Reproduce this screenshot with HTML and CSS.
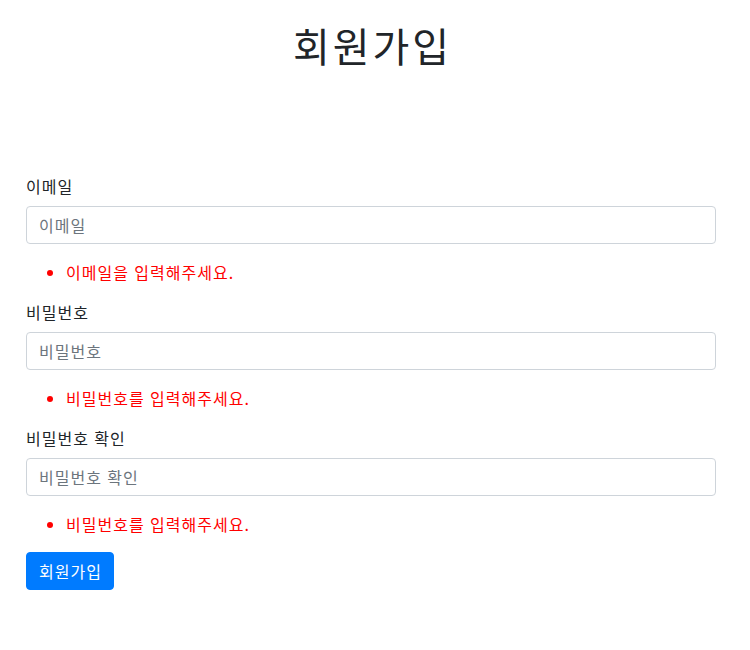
FILE: index.html
```html
<!DOCTYPE html>
<html lang="ko">
<head>
<meta charset="utf-8">
<title>회원가입</title>
<link rel="stylesheet" href="styles.css">
</head>
<body>
<div class="container">
  <h1 class="title">회원가입</h1>
  <form class="form">
    <label class="label" for="email">이메일</label>
    <input class="input" id="email" type="text" placeholder="이메일">
    <ul class="errors"><li>이메일을 입력해주세요.</li></ul>
    <label class="label" for="pw">비밀번호</label>
    <input class="input" id="pw" type="password" placeholder="비밀번호">
    <ul class="errors"><li>비밀번호를 입력해주세요.</li></ul>
    <label class="label" for="pw2">비밀번호 확인</label>
    <input class="input" id="pw2" type="password" placeholder="비밀번호 확인">
    <ul class="errors"><li>비밀번호를 입력해주세요.</li></ul>
    <button class="btn" type="button">회원가입</button>
  </form>
</div>
</body>
</html>
```
FILE: styles.css
```css
* { box-sizing: border-box; }
body {
  margin: 0;
  font-family: "Noto Sans CJK KR", "Noto Sans", sans-serif;
  font-size: 16px;
  line-height: 1.5;
  letter-spacing: 1px;
  color: #212529;
  background: #fff;
}
.container {
  padding: 21px 34px 0 26px;
}
.title {
  margin: 0;
  text-align: center;
  font-size: 40px;
  font-weight: 400;
  line-height: 48px;
  letter-spacing: 3px;
  text-indent: 3px;
}
.form {
  margin-top: 105px;
  display: flex;
  flex-direction: column;
  align-items: flex-start;
}
.label {
  display: block;
  margin-bottom: 8px;
  line-height: 24px;
}
.input {
  display: block;
  width: 100%;
  height: 38px;
  padding: 6px 12px;
  font-family: inherit;
  font-size: 16px;
  letter-spacing: 1px;
  color: #495057;
  border: 1px solid #ced4da;
  border-radius: 4px;
  background: #fff;
}
.input::placeholder { color: #6c757d; opacity: 1; }
.errors {
  margin: 16px 0;
  padding-left: 40px;
  line-height: 24px;
  color: red;
}
.btn {
  height: 38px;
  padding: 6px 11px 6px 12px;
  font-family: inherit;
  font-size: 16px;
  letter-spacing: 1px;
  color: #fff;
  background: #007bff;
  border: 1px solid #007bff;
  border-radius: 4px;
}
```
